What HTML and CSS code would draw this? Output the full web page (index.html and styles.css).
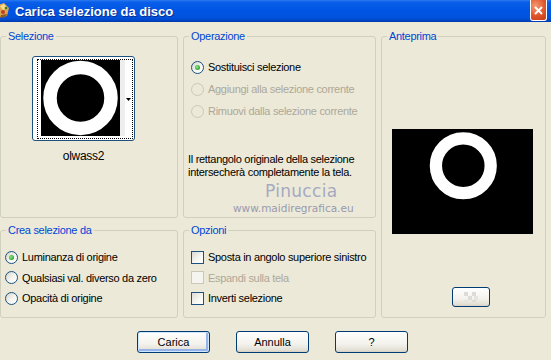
FILE: index.html
```html
<!DOCTYPE html>
<html lang="it">

<head>
  <meta charset="UTF-8">
  <title>Carica selezione da disco</title>
  <link rel="stylesheet" href="styles.css">
</head>

<body>

  <div class="titlebar">
    <svg class="app-icon" width="10" height="18" viewBox="0 0 10 18">
      <path d="M-6 4 L4 1 L9 6 L7 14 L-6 16 Z" fill="#d9a84e" />
      <path d="M0 4 L4 2 L7 6 L3 8 Z" fill="#f3dc8c" />
      <circle cx="3" cy="10" r="2" fill="#c0392b" />
      <circle cx="6" cy="6" r="1.3" fill="#3a7a2a" />
      <path d="M1 13 L7 12 L6 15 L0 16 Z" fill="#8a5a2a" />
    </svg>
    <span class="title">Carica selezione da disco</span>
    <span class="close">
      <svg width="9" height="9" viewBox="0 0 9 9">
        <path d="M1 1 L8 8 M8 1 L1 8" stroke="#fff" stroke-width="2" />
      </svg>
    </span>
  </div>

  <div class="panels">

    <fieldset class="group">
      <legend>Selezione</legend>
      <div class="thumbwrap">
        <div class="thumb">
          <div class="focus">
            <svg class="thumb-img" width="79" height="76" viewBox="0 0 79 76">
              <rect width="79" height="76" fill="#000" />
              <circle cx="39.5" cy="38" r="30.5" fill="none" stroke="#fff" stroke-width="13.5" />
            </svg>
            <span class="strip"></span>
            <span class="drop">
              <svg width="5" height="3" viewBox="0 0 5 3"><path d="M0 0 H5 L2.5 3 Z" fill="#000" /></svg>
            </span>
          </div>
        </div>
        <p class="name">olwass2</p>
      </div>
    </fieldset>

    <fieldset class="group">
      <legend>Operazione</legend>
      <div class="list list-op">
        <label class="row"><span class="radio on"></span>Sostituisci selezione</label>
        <label class="row disabled"><span class="radio"></span>Aggiungi alla selezione corrente</label>
        <label class="row disabled"><span class="radio"></span>Rimuovi dalla selezione corrente</label>
      </div>
      <p class="note">Il rettangolo originale della selezione<br>intersecherà completamente la tela.</p>
      <p class="mark">Pinuccia</p>
      <p class="mark-url">www.maidiregrafica.eu</p>
    </fieldset>

    <fieldset class="group preview-group">
      <legend>Anteprima</legend>
      <svg class="preview" width="141" height="105" viewBox="0 0 141 105">
        <rect width="141" height="105" fill="#000" />
        <circle cx="71.3" cy="36.7" r="27.4" fill="none" stroke="#fff" stroke-width="12.3" />
      </svg>
      <button class="btn btn-small">
        <svg width="14" height="10" viewBox="0 0 14 10">
          <rect x="0" y="0" width="4" height="4" fill="#dedcd6" />
          <rect x="8" y="0" width="4" height="4" fill="#dedcd6" />
          <rect x="4" y="4" width="4" height="4" fill="#dedcd6" />
          <rect x="10" y="4" width="4" height="4" fill="#e6e4de" />
          <rect x="0" y="8" width="4" height="2" fill="#e6e4de" />
          <rect x="8" y="8" width="4" height="2" fill="#dedcd6" />
        </svg>
      </button>
    </fieldset>

    <fieldset class="group">
      <legend>Crea selezione da</legend>
      <div class="list list-src">
        <label class="row short"><span class="radio on"></span>Luminanza di origine</label>
        <label class="row short"><span class="radio"></span>Qualsiasi val. diverso da zero</label>
        <label class="row short"><span class="radio"></span>Opacità di origine</label>
      </div>
    </fieldset>

    <fieldset class="group">
      <legend>Opzioni</legend>
      <div class="list list-opt">
        <label class="row short"><span class="check"></span>Sposta in angolo superiore sinistro</label>
        <label class="row short disabled"><span class="check"></span>Espandi sulla tela</label>
        <label class="row short"><span class="check"></span>Inverti selezione</label>
      </div>
    </fieldset>

  </div>

  <div class="actions">
    <button class="btn btn-default">Carica</button>
    <button class="btn">Annulla</button>
    <button class="btn">?</button>
  </div>

</body>

</html>
```

FILE: styles.css
```css
* {
  box-sizing: border-box;
}

body {
  margin: 0;
  width: 551px;
  height: 360px;
  overflow: hidden;
  background: #ece9d8;
  font-family: "Liberation Sans", Arial, sans-serif;
  font-size: 11px;
  letter-spacing: -0.3px;
  color: #000;
}

p {
  margin: 0;
}

/* Title bar */
.titlebar {
  height: 22px;
  display: flex;
  align-items: center;
  background: linear-gradient(#2b7af0 0%, #0a5fe8 10%, #0055e5 45%, #0052dd 80%, #0046c8 92%, #0036a6 100%);
  color: #fff;
}

.app-icon {
  flex: none;
  align-self: flex-start;
  margin-top: 2px;
}

.title {
  margin-left: 5px;
  font-size: 13px;
  font-weight: bold;
  letter-spacing: 0;
  text-shadow: 1px 1px #0c2c8c;
}

.close {
  margin-left: auto;
  margin-right: 4px;
  align-self: flex-start;
  width: 17px;
  height: 21px;
  display: flex;
  align-items: center;
  justify-content: center;
  border: 1px solid #fff;
  border-top: none;
  border-radius: 0 0 3px 3px;
  background: radial-gradient(circle at 30% 30%, #f39a74, #e2552b 55%, #c43a14);
}

/* Group boxes */
.panels {
  display: grid;
  grid-template-columns: 178px 193px 165px;
  grid-template-rows: 188px 94px;
  gap: 6px 5px;
  padding-top: 8px;
}

.group {
  margin: 0;
  padding: 0;
  min-width: 0;
  border: 1px solid #d0d0bf;
  border-radius: 3px;
}

legend {
  margin-left: 5px;
  padding: 0 2px;
  line-height: 13px;
  color: #0046d5;
}

.preview-group {
  grid-column: 3;
  grid-row: 1 / 3;
}

/* Selection thumbnail */
.thumbwrap {
  width: 103px;
  margin: 13px 0 0 31px;
}

.thumb {
  height: 85px;
  display: flex;
  padding: 2px 1px 1px 4px;
  border: 1px solid #1c5180;
  border-radius: 3px;
  background: #fff;
}

.focus {
  flex: 1;
  display: flex;
  padding-left: 3px;
  border: 1px dotted #000;
}

.thumb-img {
  flex: none;
  filter: blur(0.3px);
}

.strip {
  width: 5px;
  height: 76px;
  background: #eeeeee;
}

.drop {
  flex: 1;
  display: flex;
  align-items: center;
  justify-content: center;
}

.name {
  margin-top: 9px;
  line-height: 13px;
  text-align: center;
  font-size: 12px;
}

/* Radio and check rows */
.row {
  display: flex;
  align-items: center;
  gap: 4px;
  height: 22px;
}

.row.short {
  height: 20.5px;
}

.row.disabled {
  color: #aca899;
}

.list-op {
  margin: 13px 0 0 7px;
}

.list-src {
  margin: 10px 0 0 4px;
}

.list-opt {
  margin: 10px 0 0 7px;
}

.radio {
  flex: none;
  width: 13px;
  height: 13px;
  display: flex;
  align-items: center;
  justify-content: center;
  border: 1px solid #1c5180;
  border-radius: 50%;
  background: linear-gradient(135deg, #d6d3c6, #f6f5f0 55%, #fff);
}

.radio.on::after {
  content: "";
  width: 5px;
  height: 5px;
  border-radius: 50%;
  background: radial-gradient(circle at 40% 40%, #8ee88e, #21a121 75%);
}

.disabled .radio {
  border-color: #cac8bb;
  background: #ece9d8;
}

.check {
  flex: none;
  width: 13px;
  height: 13px;
  border: 1px solid #1c5180;
  background: linear-gradient(135deg, #dcdad2, #f7f7f4 60%, #fff);
}

.disabled .check {
  border-color: #cac8bb;
  background: #f5f4ee;
}

/* Operation note and watermark */
.note {
  margin: 31px 0 0 4px;
  line-height: 13px;
}

.mark {
  margin: 3px 0 0 81px;
  font-family: "DejaVu Sans", sans-serif;
  font-size: 17px;
  line-height: 18px;
  letter-spacing: 0.3px;
  color: #a6a9c2;
}

.mark-url {
  margin: 2px 0 0 49px;
  font-family: "DejaVu Sans", sans-serif;
  font-size: 10.5px;
  line-height: 12px;
  letter-spacing: 0;
  color: #9a9aae;
}

/* Preview */
.preview {
  display: block;
  margin: 86px 0 0 10px;
  filter: blur(0.3px);
}

/* Buttons */
.btn {
  width: 73px;
  height: 22px;
  padding: 0;
  font: inherit;
  color: #000;
  border: 1px solid #003c74;
  border-radius: 3px;
  background: linear-gradient(#ffffff, #f3f2ec 60%, #e3e0d4 90%, #d6d0c2);
}

.btn-default {
  box-shadow: inset 0 0 0 1px #cee7ff, inset -1px -1px 0 2px #96b4ea;
}

.btn-small {
  display: flex;
  align-items: center;
  justify-content: center;
  width: 38px;
  height: 20px;
  margin: 53px 0 0 70px;
}

.actions {
  display: flex;
  gap: 26px;
  margin-top: 13px;
  padding-left: 137px;
}
```
